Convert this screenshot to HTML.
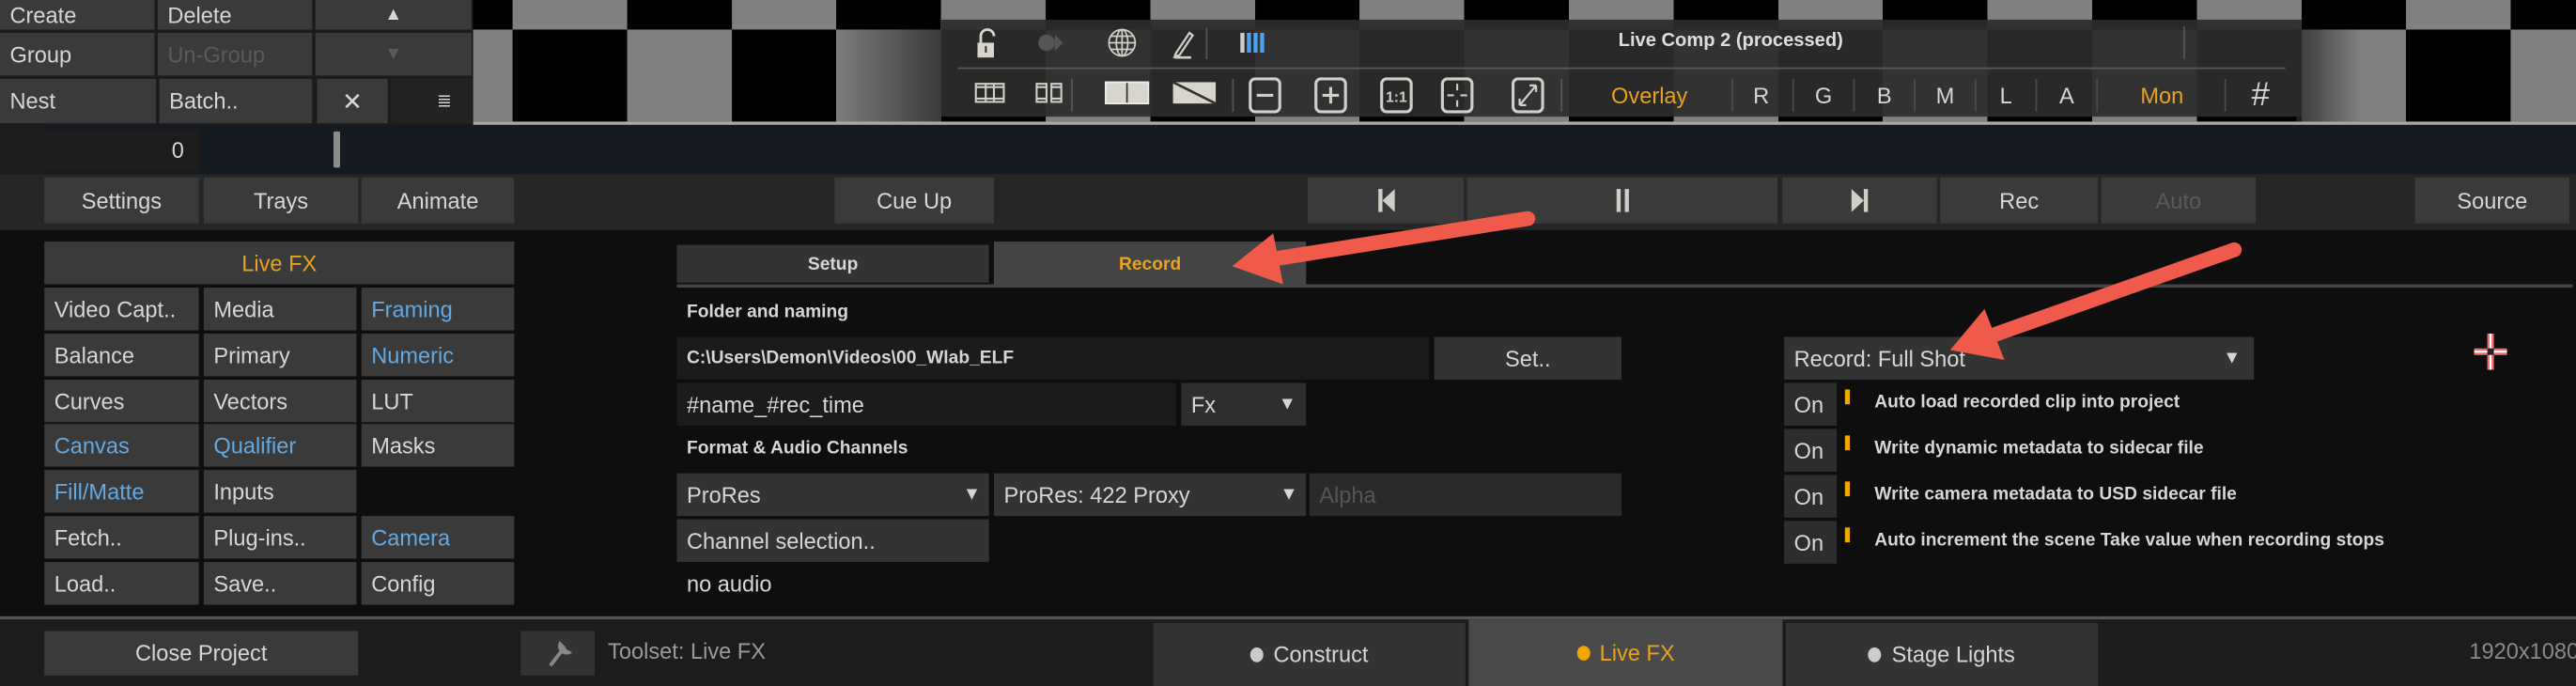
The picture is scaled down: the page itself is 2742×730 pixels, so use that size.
<!DOCTYPE html>
<html><head><meta charset="utf-8">
<style>
html,body{margin:0;padding:0;background:#0e0e0e;overflow:hidden;width:2742px;height:730px}
#w{position:absolute;left:0;top:0;width:1568px;height:417.5px;transform:scale(1.74872);transform-origin:0 0;font-family:"Liberation Sans",Arial,sans-serif;color:#d6d6d6;font-size:13.5px;background:#0e0e0e;overflow:hidden}
.a{position:absolute;box-sizing:border-box}
.b{position:absolute;box-sizing:border-box;background:#3a3a3a;display:flex;align-items:center;white-space:nowrap}
.c{justify-content:center}
.l{padding-left:6px}
.bl{color:#62a9e4}
.or{color:#e8a21e}
.dim{color:#5a5a5a}
.sm{font-size:11px;font-weight:bold}
.sep{position:absolute;top:48px;width:1px;height:20px;background:#4a4a4a}
.tl{position:absolute;top:48px;height:20px;font-size:13.5px;display:flex;align-items:center;justify-content:center}
</style></head><body><div id="w">
<!-- top-left button bank -->
<div class="a" style="left:0;top:0;width:288px;height:76px;background:#1c1c1c"></div>
<div class="b l" style="left:0;top:0;width:94px;height:18px">Create</div>
<div class="b l" style="left:96px;top:0;width:94px;height:18px">Delete</div>
<div class="b c" style="left:192px;top:0;width:95px;height:18px;font-size:11px">▲</div>
<div class="b l" style="left:0;top:20px;width:94px;height:26px">Group</div>
<div class="b l dim" style="left:96px;top:20px;width:94px;height:26px">Un-Group</div>
<div class="b c dim" style="left:192px;top:20px;width:95px;height:26px;font-size:11px">▼</div>
<div class="b l" style="left:0;top:48px;width:95px;height:27px">Nest</div>
<div class="b l" style="left:97px;top:48px;width:93px;height:27px">Batch..</div>
<div class="b c" style="left:193px;top:48px;width:43px;height:27px;font-size:15px">✕</div>
<div class="b c" style="left:238px;top:48px;width:49px;height:27px;background:#222"><span style="margin-left:16px;font-size:11px">≣</span></div>
<!-- checker -->
<div class="a" style="left:288px;top:0;width:1280px;height:18px;background:repeating-linear-gradient(90deg,#808080 0 63.7px,#000 63.7px 127.4px);background-position:30px 0"></div>
<div class="a" style="left:288px;top:18px;width:1280px;height:56px;background:repeating-linear-gradient(90deg,#000 0 63.7px,#808080 63.7px 127.4px);background-position:30px 0"></div>
<div class="a" style="left:509px;top:18px;width:64px;height:56px;background:linear-gradient(90deg,#7c7c7c,#3a3a3a)"></div>
<div class="a" style="left:288px;top:74px;width:1280px;height:2px;background:#a8a8a8"></div>
<!-- viewer toolbar -->
<div class="a" style="left:573px;top:12px;width:828px;height:59px;background:rgba(44,44,44,.93)"></div>
<div class="a" style="left:1398px;top:18px;width:40px;height:56px;background:linear-gradient(90deg,rgba(40,40,40,.8),rgba(40,40,40,0))"></div>
<div class="a" style="left:583px;top:41px;width:808px;height:1px;background:#5a5a5a"></div>
<svg class="a" style="left:573px;top:12px" width="828" height="59" viewBox="0 0 828 59">
 <g fill="none" stroke="#d8d6cc" stroke-width="1.6">
  <path d="M24 14 v-4 a4 4 0 0 1 8 0"/>
 </g>
 <rect x="22" y="14" width="10" height="9" fill="#d8d6cc"/><rect x="26.5" y="16" width="1.2" height="4" fill="#333"/>
 <circle cx="64" cy="14" r="5" fill="#555"/><path d="M69 9 l5 5 -5 5z" fill="#555"/>
 <g fill="none" stroke="#d0d0c8" stroke-width="1"><circle cx="110" cy="14" r="8"/><ellipse cx="110" cy="14" rx="3.5" ry="8"/><path d="M102 14h16M103.5 10h13M103.5 18h13M110 6v16"/></g>
 <path d="M143 20 l8 -12 2 1.5 -8 12 -3 1z" fill="none" stroke="#d0d0c8" stroke-width="1.3"/><path d="M142 23h10" stroke="#d0d0c8" stroke-width="1.5"/>
 <rect x="161" y="5" width="1" height="19" fill="#555"/>
 <rect x="182" y="8" width="2.5" height="12" fill="#cfcfc8"/><rect x="186" y="8" width="2.5" height="12" fill="#4aa3f0"/><rect x="190" y="8" width="2.5" height="12" fill="#4aa3f0"/><rect x="194" y="8" width="2.5" height="12" fill="#4aa3f0"/>
 <rect x="756" y="4" width="1" height="20" fill="#555"/>
 <g fill="none" stroke="#cfcfc8" stroke-width="1.2">
  <rect x="21" y="39" width="17" height="11"/><path d="M21 41h17M21 48h17M27 39v11M32 39v11"/>
  <rect x="58" y="39" width="6" height="11"/><rect x="67" y="39" width="6" height="11"/><path d="M58 41h6M58 48h6M67 41h6M67 48h6"/>
 </g>
 <rect x="79" y="36" width="1" height="20" fill="#555"/>
 <rect x="100" y="38" width="26" height="13" fill="#d8d6cc"/><rect x="112.5" y="38" width="1" height="13" fill="#333"/><rect x="100" y="38" width="26" height="13" fill="none" stroke="#eee" stroke-width="1"/>
 <rect x="141" y="38" width="26" height="13" fill="#d8d6cc"/><path d="M141 38 L167 51" stroke="#333" stroke-width="1.5"/>
 <rect x="177" y="36" width="1" height="20" fill="#555"/>
 <g fill="none" stroke="#cfcfc8" stroke-width="1.8">
  <rect x="188" y="36" width="18" height="20" rx="3"/><path d="M192 46h10"/>
  <rect x="228" y="36" width="18" height="20" rx="3"/><path d="M232 46h10M237 41v10"/>
  <rect x="268" y="36" width="18" height="20" rx="3"/>
  <rect x="305" y="36" width="18" height="20" rx="3"/><path d="M314 39v4M314 49v4M308 46h4M316 46h4" stroke-width="1.2"/>
  <rect x="348" y="36" width="18" height="20" rx="3"/><path d="M352 52l10 -12M352 52v-4M352 52h4M362 40h-4M362 40v4" stroke-width="1.3"/>
 </g>
 <text x="277" y="50" fill="#cfcfc8" font-size="9" font-weight="bold" text-anchor="middle" font-family="Liberation Sans,sans-serif">1:1</text>
 <rect x="377" y="36" width="1" height="20" fill="#555"/>
</svg>
<div class="a" style="left:573px;top:19px;width:828px;text-align:center;font-size:11.5px;font-weight:bold;color:#ddd;padding-left:133px">Live Comp 2 (processed)</div>
<div class="tl or" style="left:970px;width:68px">Overlay</div>
<div class="sep" style="left:1054px"></div>
<div class="tl" style="left:1060px;width:24px">R</div><div class="sep" style="left:1091px"></div>
<div class="tl" style="left:1098px;width:24px">G</div><div class="sep" style="left:1128px"></div>
<div class="tl" style="left:1135px;width:24px">B</div><div class="sep" style="left:1165px"></div>
<div class="tl" style="left:1172px;width:24px">M</div><div class="sep" style="left:1202px"></div>
<div class="tl" style="left:1209px;width:24px">L</div><div class="sep" style="left:1239px"></div>
<div class="tl" style="left:1246px;width:24px">A</div><div class="sep" style="left:1276px"></div>
<div class="tl or" style="left:1296px;width:40px">Mon</div><div class="sep" style="left:1354px"></div>
<div class="tl" style="left:1364px;width:24px;font-size:20px">#</div>
<!-- timeline -->
<div class="a" style="left:0;top:76px;width:1568px;height:30px;background:#141a20"></div>
<div class="a" style="left:0;top:76px;width:27px;height:30px;background:#1c1c1c"></div>
<div class="a" style="left:27px;top:79px;width:95px;height:25px;background:#1c1c1c;text-align:right;padding-right:10px;line-height:25px">0</div>
<div class="a" style="left:203px;top:80px;width:4px;height:22px;background:#8a8d88;border-radius:1px"></div>
<!-- transport row -->
<div class="a" style="left:0;top:106px;width:1568px;height:34px;background:#262626"></div>
<div class="b c" style="left:27px;top:108px;width:94px;height:28px">Settings</div>
<div class="b c" style="left:124px;top:108px;width:94px;height:28px">Trays</div>
<div class="b c" style="left:220px;top:108px;width:93px;height:28px">Animate</div>
<div class="b c" style="left:508px;top:108px;width:97px;height:28px">Cue Up</div>
<div class="b c" style="left:796px;top:108px;width:95px;height:28px"><svg width="12" height="16"><rect x="1" y="1" width="2.5" height="14" fill="#cfcfc8"/><path d="M11 1v14L3.5 8z" fill="#cfcfc8"/></svg></div>
<div class="b c" style="left:893px;top:108px;width:189px;height:28px"><svg width="10" height="16"><rect x="1" y="1" width="2.5" height="14" fill="#cfcfc8"/><rect x="6" y="1" width="2.5" height="14" fill="#cfcfc8"/></svg></div>
<div class="b c" style="left:1085px;top:108px;width:94px;height:28px"><svg width="12" height="16"><path d="M1 1v14L8.5 8z" fill="#cfcfc8"/><rect x="8.5" y="1" width="2.5" height="14" fill="#cfcfc8"/></svg></div>
<div class="b c" style="left:1181px;top:108px;width:96px;height:28px">Rec</div>
<div class="b c dim" style="left:1279px;top:108px;width:94px;height:28px">Auto</div>
<div class="b c" style="left:1470px;top:108px;width:94px;height:28px">Source</div>
<!-- left grid -->
<div class="b c or" style="left:27px;top:147px;width:286px;height:26px">Live FX</div>
<div class="b l" style="left:27px;top:175px;width:94px;height:26px">Video Capt..</div>
<div class="b l" style="left:124px;top:175px;width:93px;height:26px">Media</div>
<div class="b l bl" style="left:220px;top:175px;width:93px;height:26px">Framing</div>
<div class="b l" style="left:27px;top:203px;width:94px;height:26px">Balance</div>
<div class="b l" style="left:124px;top:203px;width:93px;height:26px">Primary</div>
<div class="b l bl" style="left:220px;top:203px;width:93px;height:26px">Numeric</div>
<div class="b l" style="left:27px;top:231px;width:94px;height:26px">Curves</div>
<div class="b l" style="left:124px;top:231px;width:93px;height:26px">Vectors</div>
<div class="b l" style="left:220px;top:231px;width:93px;height:26px">LUT</div>
<div class="b l bl" style="left:27px;top:258px;width:94px;height:26px">Canvas</div>
<div class="b l bl" style="left:124px;top:258px;width:93px;height:26px">Qualifier</div>
<div class="b l" style="left:220px;top:258px;width:93px;height:26px">Masks</div>
<div class="b l bl" style="left:27px;top:286px;width:94px;height:26px">Fill/Matte</div>
<div class="b l" style="left:124px;top:286px;width:93px;height:26px">Inputs</div>
<div class="b l" style="left:27px;top:314px;width:94px;height:26px">Fetch..</div>
<div class="b l" style="left:124px;top:314px;width:93px;height:26px">Plug-ins..</div>
<div class="b l bl" style="left:220px;top:314px;width:93px;height:26px">Camera</div>
<div class="b l" style="left:27px;top:342px;width:94px;height:26px">Load..</div>
<div class="b l" style="left:124px;top:342px;width:93px;height:26px">Save..</div>
<div class="b l" style="left:220px;top:342px;width:93px;height:26px">Config</div>
<!-- record panel -->
<div class="b c sm" style="left:412px;top:149px;width:190px;height:23px;background:#333">Setup</div>
<div class="b c sm or" style="left:605px;top:147px;width:190px;height:27px;background:#444">Record</div>
<div class="a" style="left:412px;top:173px;width:1154px;height:2px;background:#444"></div>
<div class="a sm" style="left:418px;top:184px">Folder and naming</div>
<div class="b sm l" style="left:412px;top:205px;width:458px;height:26px;background:#1b1b1b">C:\Users\Demon\Videos\00_Wlab_ELF</div>
<div class="b c" style="left:873px;top:205px;width:114px;height:26px;background:#333">Set..</div>
<div class="b l" style="left:412px;top:233px;width:304px;height:26px;background:#1b1b1b">#name_#rec_time</div>
<div class="b l" style="left:719px;top:233px;width:76px;height:26px;background:#2e2e2e">Fx<span style="position:absolute;right:6px;font-size:11px">▼</span></div>
<div class="a sm" style="left:418px;top:267px">Format &amp; Audio Channels</div>
<div class="b l" style="left:412px;top:288px;width:190px;height:26px;background:#333">ProRes<span style="position:absolute;right:5px;font-size:11px">▼</span></div>
<div class="b l" style="left:605px;top:288px;width:190px;height:26px;background:#333">ProRes: 422 Proxy<span style="position:absolute;right:5px;font-size:11px">▼</span></div>
<div class="b l dim" style="left:797px;top:288px;width:190px;height:26px;background:#2a2a2a;color:#555">Alpha</div>
<div class="b l" style="left:412px;top:316px;width:190px;height:26px;background:#333">Channel selection..</div>
<div class="a" style="left:418px;top:348px">no audio</div>
<div class="b l" style="left:1086px;top:205px;width:286px;height:26px;background:#333">Record: Full Shot<span style="position:absolute;right:8px;font-size:11px">▼</span></div>
<div class="b l" style="left:1086px;top:233px;width:32px;height:26px;background:#2d2d2d">On</div>
<div class="b l" style="left:1086px;top:261px;width:32px;height:26px;background:#2d2d2d">On</div>
<div class="b l" style="left:1086px;top:289px;width:32px;height:26px;background:#2d2d2d">On</div>
<div class="b l" style="left:1086px;top:317px;width:32px;height:26px;background:#2d2d2d">On</div>
<div class="a" style="left:1123px;top:237px;width:3px;height:9px;background:#f0a800"></div>
<div class="a" style="left:1123px;top:265px;width:3px;height:9px;background:#f0a800"></div>
<div class="a" style="left:1123px;top:293px;width:3px;height:9px;background:#f0a800"></div>
<div class="a" style="left:1123px;top:321px;width:3px;height:9px;background:#f0a800"></div>
<div class="a sm" style="left:1141px;top:239px">Auto load recorded clip into project</div>
<div class="a sm" style="left:1141px;top:267px">Write dynamic metadata to sidecar file</div>
<div class="a sm" style="left:1141px;top:295px">Write camera metadata to USD sidecar file</div>
<div class="a sm" style="left:1141px;top:323px">Auto increment the scene Take value when recording stops</div>
<svg class="a" style="left:1505px;top:202px" width="22" height="24"><path d="M11 1v22M1 12h20" stroke="#f07070" stroke-width="4"/><path d="M11 1v22M1 12h20" stroke="#fff" stroke-width="1.2"/><rect x="9" y="10" width="4" height="4" fill="#222"/></svg>
<!-- bottom bar -->
<div class="a" style="left:0;top:375px;width:1568px;height:2px;background:#555"></div>
<div class="a" style="left:0;top:377px;width:1568px;height:41px;background:#1c1c1c"></div>
<div class="b c" style="left:27px;top:384px;width:191px;height:27px">Close Project</div>
<div class="b c" style="left:317px;top:384px;width:45px;height:27px;background:#333"><svg width="16" height="18"><path d="M3 16 L10 7 M9 3 a4 4 0 0 0 5 5 l-2 -1 -1 -2z" stroke="#888" stroke-width="2.2" fill="none"/></svg></div>
<div class="a" style="left:370px;top:389px;color:#9a9a9a">Toolset: Live FX</div>
<div class="b c" style="left:702px;top:379px;width:190px;height:39px;background:#333"><span style="display:inline-block;width:8px;height:9px;border-radius:50%;background:#ccc;margin-right:6px"></span>Construct</div>
<div class="b c or" style="left:894px;top:377px;width:191px;height:41px;background:#4a4a4a"><span style="display:inline-block;width:8px;height:9px;border-radius:50%;background:#f0a800;margin-right:6px"></span>Live FX</div>
<div class="b c" style="left:1087px;top:379px;width:190px;height:39px;background:#333"><span style="display:inline-block;width:8px;height:9px;border-radius:50%;background:#ccc;margin-right:6px"></span>Stage Lights</div>
<div class="a" style="left:1503px;top:389px;color:#8a8a8a">1920x1080</div>
<!-- arrows -->
<svg class="a" style="left:0;top:0" width="1568" height="418">
 <g fill="#ef5a4a">
  <line x1="930" y1="133" x2="776" y2="157.5" stroke="#ef5a4a" stroke-width="9" stroke-linecap="round"/>
  <path d="M750 162 L781 173 L775 142z"/>
  <line x1="1360" y1="152" x2="1213" y2="204" stroke="#ef5a4a" stroke-width="9" stroke-linecap="round"/>
  <path d="M1187 213 L1220 219 L1208 188z"/>
 </g>
</svg>
</div></body></html>
